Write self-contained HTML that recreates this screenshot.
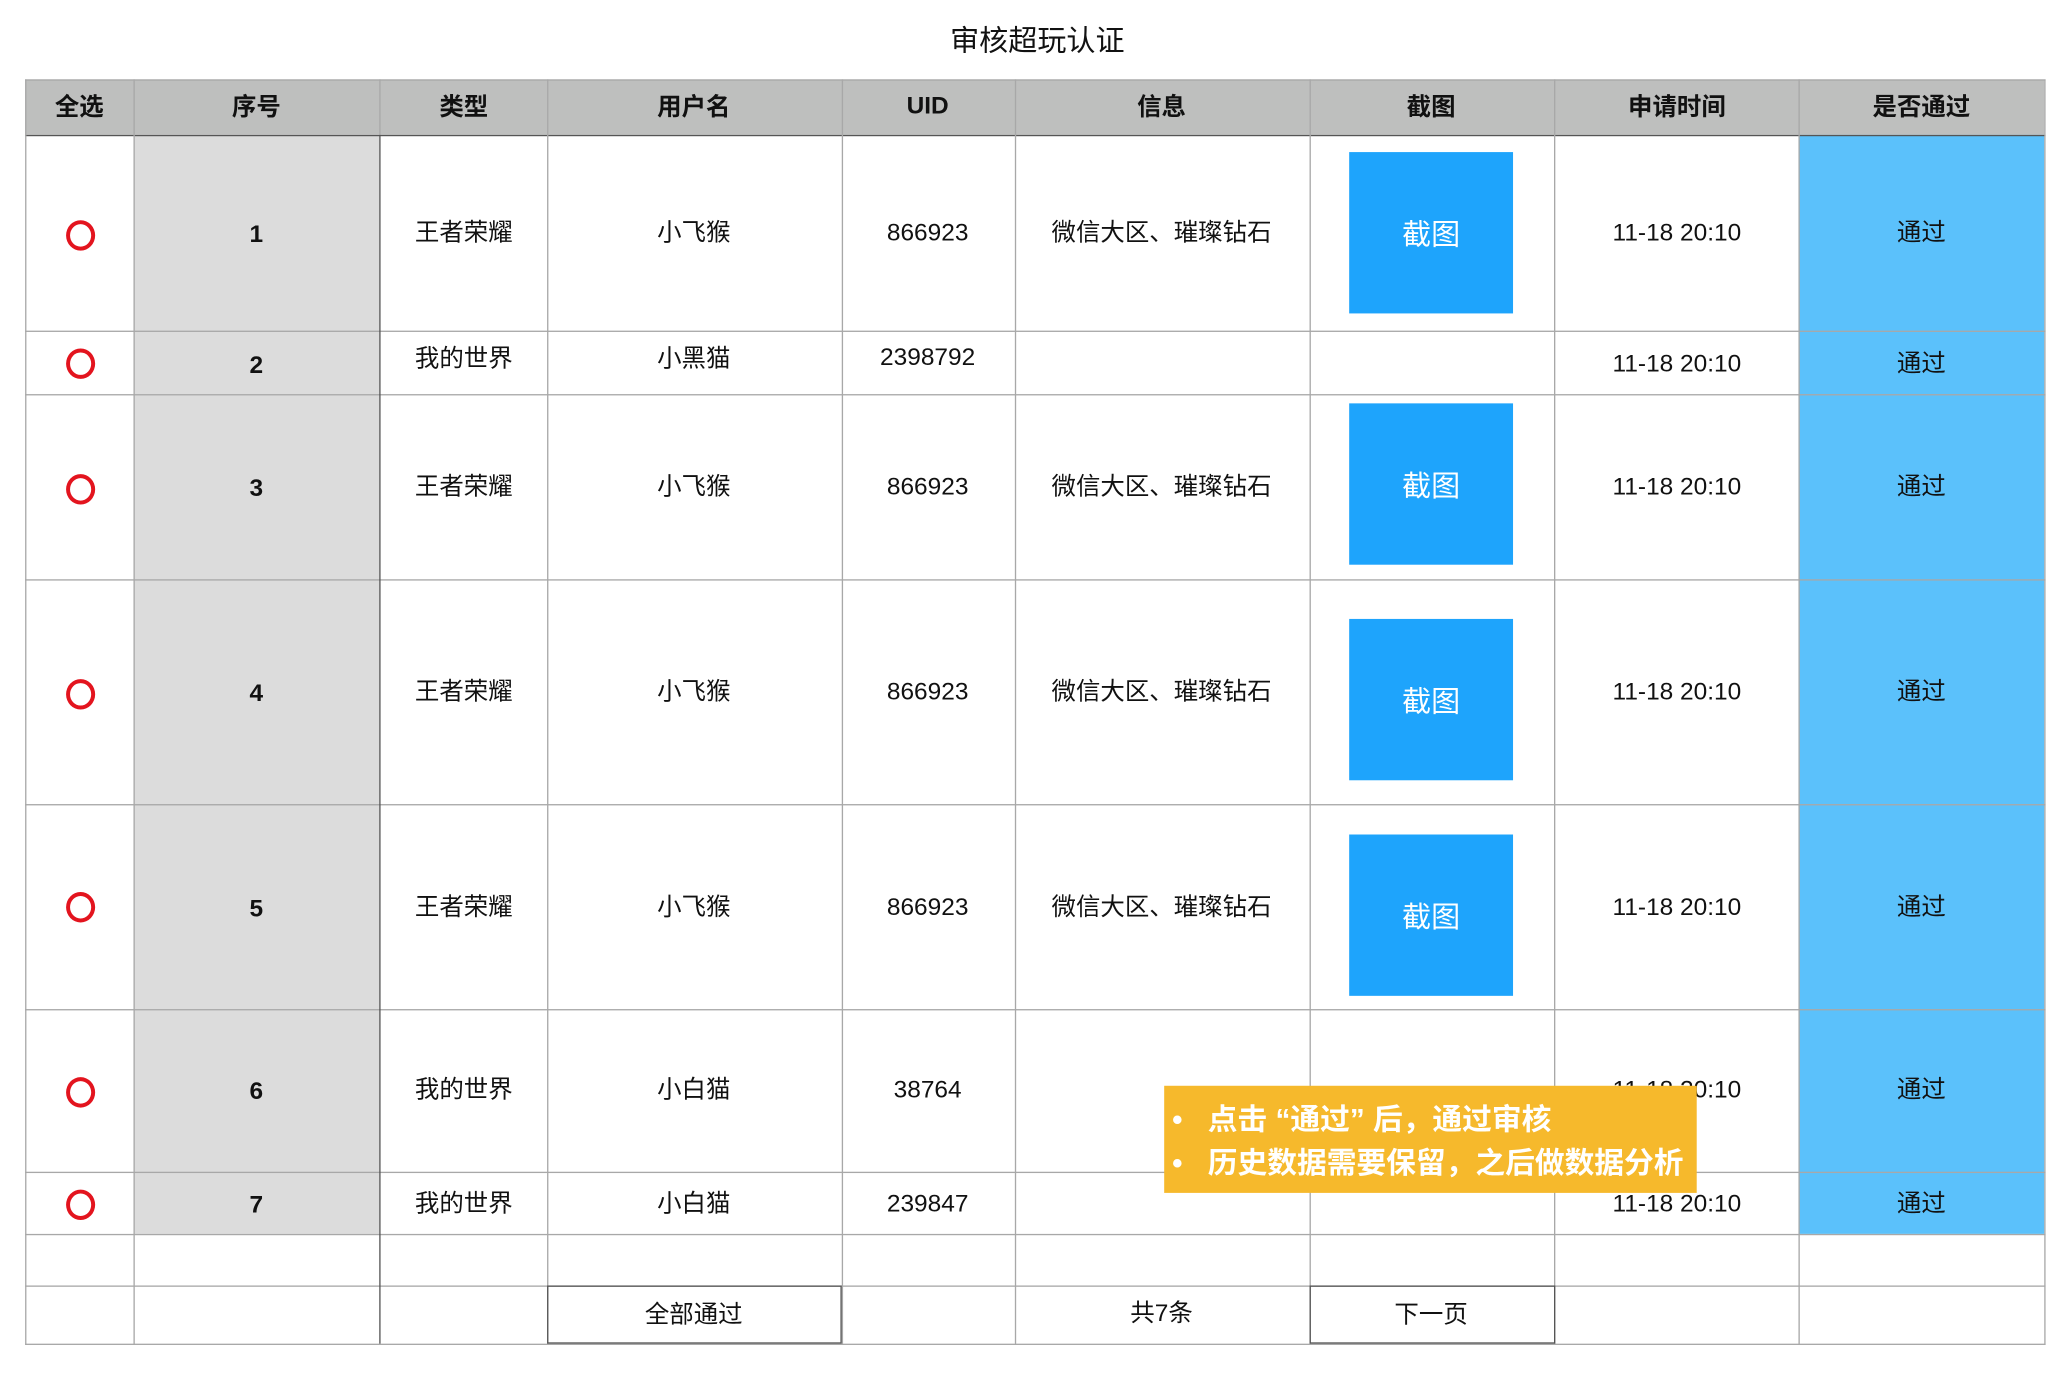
<!DOCTYPE html>
<html><head><meta charset="utf-8"><style>
html,body{margin:0;padding:0;background:#fff;width:2072px;height:1376px;overflow:hidden}
#w{position:absolute;left:0;top:0;width:1568px;height:1042px;transform:scale(1.32143,1.3225);transform-origin:0 0;font-family:"Liberation Sans","Noto Sans CJK SC",sans-serif;color:#111}
.a{position:absolute}
.t{position:absolute;transform:translate(-50%,-50%);white-space:nowrap;font-size:18.5px;line-height:22px}
.h{font-weight:bold;font-size:18.5px}
.b{font-weight:bold}
.vl{position:absolute;width:1px;background:#a8a8a8}
.hl{position:absolute;height:1px;background:#a8a8a8;left:19px;width:1529px}
.c{position:absolute;width:16px;height:17px;border:3.5px solid #e3141e;border-radius:50%;transform:translate(-50%,-50%)}
.sc{position:absolute;left:1021px;width:124px;height:122px;background:#1ea4fc;color:#fff;font-size:22px;display:flex;align-items:center;justify-content:center}
.n{position:relative;padding-left:33px;white-space:nowrap}
.n:before{content:"•";position:absolute;left:6px;top:0}
</style></head><body><div id="w">
<div class="t" style="left:785px;top:31px;font-size:22px">审核超玩认证</div>
<div class="a" style="left:19px;top:60px;width:1528px;height:42px;background:#bebfbe"></div>
<div class="a" style="left:101px;top:102px;width:186px;height:831px;background:#dcdcdc"></div>
<div class="a" style="left:1361px;top:102px;width:186px;height:831px;background:#5bc1fb"></div>
<div class="hl" style="top:60px"></div>
<div class="hl" style="top:102px;background:#555"></div>
<div class="hl" style="top:250px"></div>
<div class="hl" style="top:298px"></div>
<div class="hl" style="top:438px"></div>
<div class="hl" style="top:608px"></div>
<div class="hl" style="top:763px"></div>
<div class="hl" style="top:886px"></div>
<div class="hl" style="top:933px"></div>
<div class="hl" style="top:972px"></div>
<div class="hl" style="top:1016px"></div>
<div class="vl" style="left:19px;top:60px;height:957px"></div>
<div class="vl" style="left:101px;top:60px;height:957px"></div>
<div class="vl" style="left:287px;top:60px;height:42px"></div>
<div class="vl" style="left:287px;top:102px;height:914px;background:#555"></div>
<div class="vl" style="left:414px;top:60px;height:957px"></div>
<div class="vl" style="left:637px;top:60px;height:957px"></div>
<div class="vl" style="left:768px;top:60px;height:957px"></div>
<div class="vl" style="left:991px;top:60px;height:957px"></div>
<div class="vl" style="left:1176px;top:60px;height:957px"></div>
<div class="vl" style="left:1361px;top:60px;height:957px"></div>
<div class="vl" style="left:1547px;top:60px;height:957px"></div>
<div class="t h" style="left:60px;top:81px">全选</div>
<div class="t h" style="left:194px;top:81px">序号</div>
<div class="t h" style="left:351px;top:81px">类型</div>
<div class="t h" style="left:525px;top:81px">用户名</div>
<div class="t h" style="left:702px;top:80px">UID</div>
<div class="t h" style="left:879px;top:81px">信息</div>
<div class="t h" style="left:1083px;top:81px">截图</div>
<div class="t h" style="left:1269px;top:81px">申请时间</div>
<div class="t h" style="left:1454px;top:81px">是否通过</div>
<div class="sc" style="top:115px">截图</div>
<div class="sc" style="top:305px">截图</div>
<div class="sc" style="top:468px">截图</div>
<div class="sc" style="top:631px">截图</div>
<div class="c" style="left:61px;top:178px"></div>
<div class="t b" style="left:194px;top:177px">1</div>
<div class="t" style="left:351px;top:176px">王者荣耀</div>
<div class="t" style="left:525px;top:176px">小飞猴</div>
<div class="t" style="left:702px;top:176px">866923</div>
<div class="t" style="left:879px;top:176px">微信大区、璀璨钻石</div>
<div class="t" style="left:1269px;top:176px">11-18 20:10</div>
<div class="t" style="left:1454px;top:176px">通过</div>
<div class="c" style="left:61px;top:275px"></div>
<div class="t b" style="left:194px;top:276px">2</div>
<div class="t" style="left:351px;top:271px">我的世界</div>
<div class="t" style="left:525px;top:271px">小黑猫</div>
<div class="t" style="left:702px;top:270px">2398792</div>
<div class="t" style="left:1269px;top:275px">11-18 20:10</div>
<div class="t" style="left:1454px;top:275px">通过</div>
<div class="c" style="left:61px;top:370px"></div>
<div class="t b" style="left:194px;top:369px">3</div>
<div class="t" style="left:351px;top:368px">王者荣耀</div>
<div class="t" style="left:525px;top:368px">小飞猴</div>
<div class="t" style="left:702px;top:368px">866923</div>
<div class="t" style="left:879px;top:368px">微信大区、璀璨钻石</div>
<div class="t" style="left:1269px;top:368px">11-18 20:10</div>
<div class="t" style="left:1454px;top:368px">通过</div>
<div class="c" style="left:61px;top:525px"></div>
<div class="t b" style="left:194px;top:524px">4</div>
<div class="t" style="left:351px;top:523px">王者荣耀</div>
<div class="t" style="left:525px;top:523px">小飞猴</div>
<div class="t" style="left:702px;top:523px">866923</div>
<div class="t" style="left:879px;top:523px">微信大区、璀璨钻石</div>
<div class="t" style="left:1269px;top:523px">11-18 20:10</div>
<div class="t" style="left:1454px;top:523px">通过</div>
<div class="c" style="left:61px;top:686px"></div>
<div class="t b" style="left:194px;top:687px">5</div>
<div class="t" style="left:351px;top:686px">王者荣耀</div>
<div class="t" style="left:525px;top:686px">小飞猴</div>
<div class="t" style="left:702px;top:686px">866923</div>
<div class="t" style="left:879px;top:686px">微信大区、璀璨钻石</div>
<div class="t" style="left:1269px;top:686px">11-18 20:10</div>
<div class="t" style="left:1454px;top:686px">通过</div>
<div class="c" style="left:61px;top:826px"></div>
<div class="t b" style="left:194px;top:825px">6</div>
<div class="t" style="left:351px;top:824px">我的世界</div>
<div class="t" style="left:525px;top:824px">小白猫</div>
<div class="t" style="left:702px;top:824px">38764</div>
<div class="t" style="left:1269px;top:824px">11-18 20:10</div>
<div class="t" style="left:1454px;top:824px">通过</div>
<div class="c" style="left:61px;top:911px"></div>
<div class="t b" style="left:194px;top:911px">7</div>
<div class="t" style="left:351px;top:910px">我的世界</div>
<div class="t" style="left:525px;top:910px">小白猫</div>
<div class="t" style="left:702px;top:910px">239847</div>
<div class="t" style="left:1269px;top:910px">11-18 20:10</div>
<div class="t" style="left:1454px;top:910px">通过</div>
<div class="a" style="left:414px;top:972px;width:221px;height:42px;border:1.5px solid #555"></div>
<div class="t" style="left:525px;top:994px">全部通过</div>
<div class="t" style="left:879px;top:993px">共7条</div>
<div class="a" style="left:991px;top:972px;width:184px;height:42px;border:1.5px solid #555"></div>
<div class="t" style="left:1083px;top:994px">下一页</div>
<div class="a" style="left:881px;top:821px;width:403px;height:81px;background:#f6b92c;color:#fff;font-size:22.5px;font-weight:bold;line-height:33px;padding-top:9px;box-sizing:border-box">
<div class="n">点击 “通过” 后，通过审核</div>
<div class="n">历史数据需要保留，之后做数据分析</div>
</div>
</div></body></html>
